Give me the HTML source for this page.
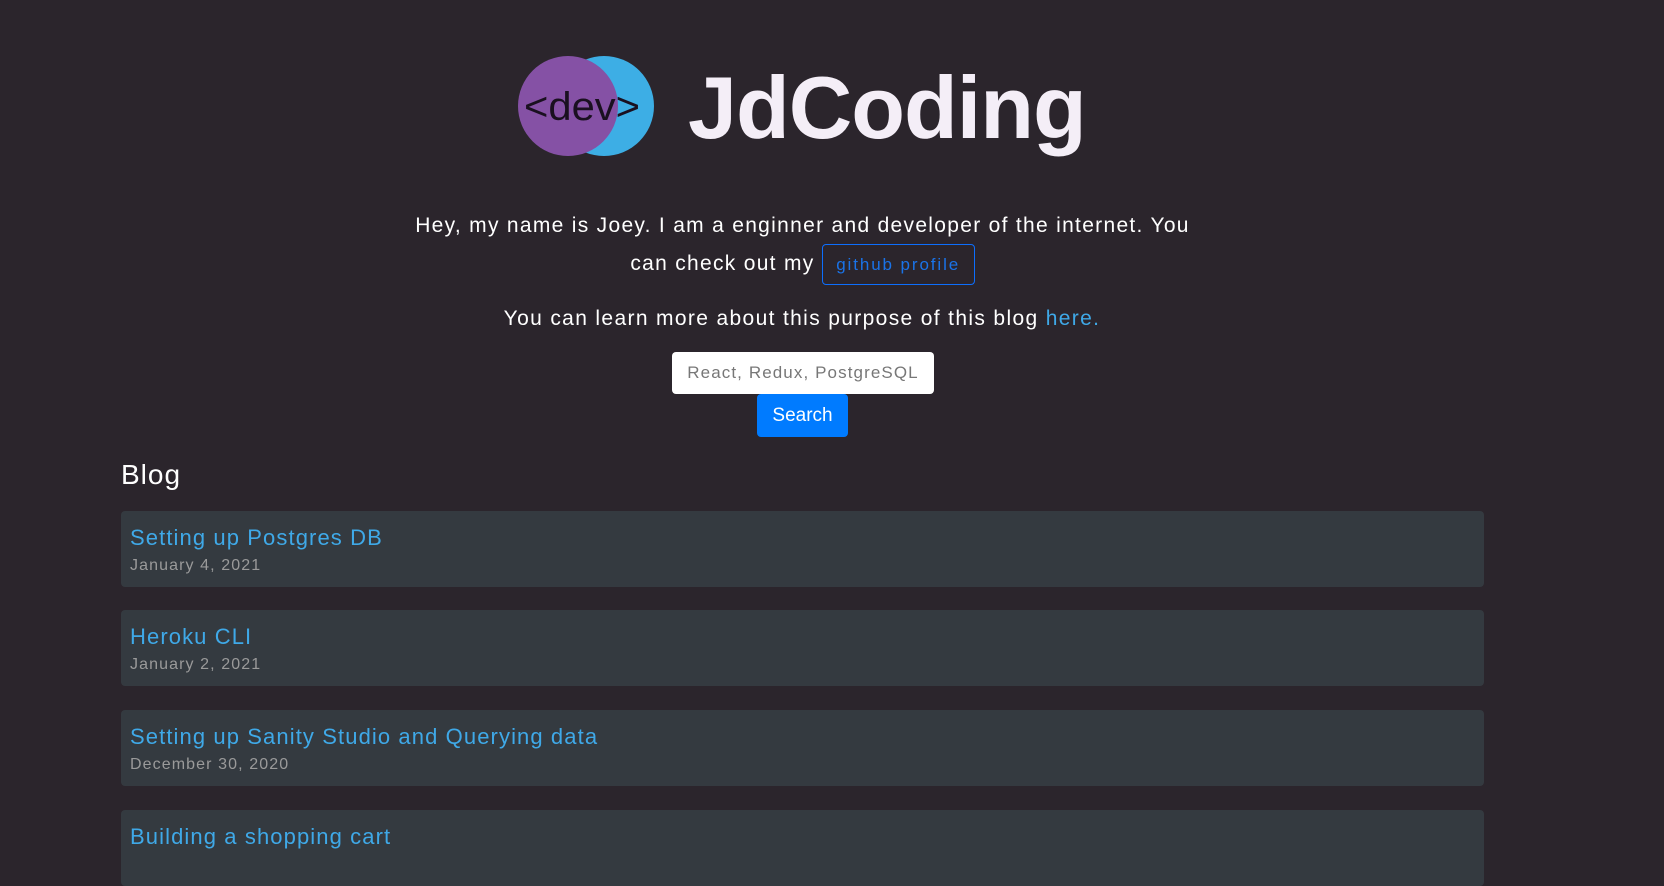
<!DOCTYPE html>
<html><head><meta charset="utf-8"><style>
body{margin:0;background:#2b252c;width:1664px;height:838px;overflow:hidden;font-family:"Liberation Sans",sans-serif;color:#fff;position:relative}
.a{position:absolute}
.c{position:absolute;left:0;width:1604px;text-align:center}
.card{position:absolute;left:121px;width:1363px;height:76px;background:#343a40;border-radius:4px}
.card .t{position:absolute;left:9px;top:14px;font-size:22px;color:#3fa9e8;white-space:nowrap;letter-spacing:1.1px}
.card .d{position:absolute;left:9px;top:46px;font-size:16px;color:#9a9a9a;letter-spacing:1.1px}
</style></head><body>
<svg class="a" style="left:516px;top:55px" width="140" height="104">
<ellipse cx="88" cy="51" rx="50" ry="50" fill="#3daee5"/>
<ellipse cx="52" cy="51" rx="50" ry="50" fill="#8551a5"/>
<text x="66" y="65" text-anchor="middle" font-family="Liberation Sans Narrow, Liberation Sans, sans-serif" font-size="40" fill="#1a1020" textLength="116" lengthAdjust="spacingAndGlyphs">&lt;dev&gt;</text>
</svg>
<div class="a" style="left:688px;top:58px;font-size:88px;font-weight:bold;color:#f4eef7;letter-spacing:-1px;line-height:100px">JdCoding</div>
<div class="a" style="left:355px;top:208px;width:895px;text-align:center;font-size:21px;line-height:36px;letter-spacing:1.3px">Hey, my name is Joey. I am a enginner and developer of the internet. You<br>can check out my <span style="display:inline-block;border:1px solid #0d6efd;border-radius:4px;color:#1a73e8;font-size:17px;padding:0;height:41px;line-height:40px;vertical-align:middle;box-sizing:border-box;width:153px;letter-spacing:1.9px">github profile</span></div>
<div class="c" style="top:307px;font-size:21px;letter-spacing:1.35px">You can learn more about this purpose of this blog <span style="color:#3fa9e8">here.</span></div>
<div class="a" style="left:672px;top:352px;width:262px;height:42px;background:#fff;border-radius:4px;color:#777;font-size:17px;line-height:42px;text-align:center;letter-spacing:1.1px">React, Redux, PostgreSQL</div>
<div class="a" style="left:757px;top:394px;width:91px;height:43px;background:#007bff;border-radius:4px;font-size:19px;line-height:43px;text-align:center">Search</div>
<div class="a" style="left:121px;top:459px;font-size:28px;letter-spacing:1px">Blog</div>
<div class="card" style="top:511px"><div class="t">Setting up Postgres DB</div><div class="d">January 4, 2021</div></div>
<div class="card" style="top:610px"><div class="t">Heroku CLI</div><div class="d">January 2, 2021</div></div>
<div class="card" style="top:710px"><div class="t">Setting up Sanity Studio and Querying data</div><div class="d">December 30, 2020</div></div>
<div class="card" style="top:810px"><div class="t">Building a shopping cart</div></div>
</body></html>
